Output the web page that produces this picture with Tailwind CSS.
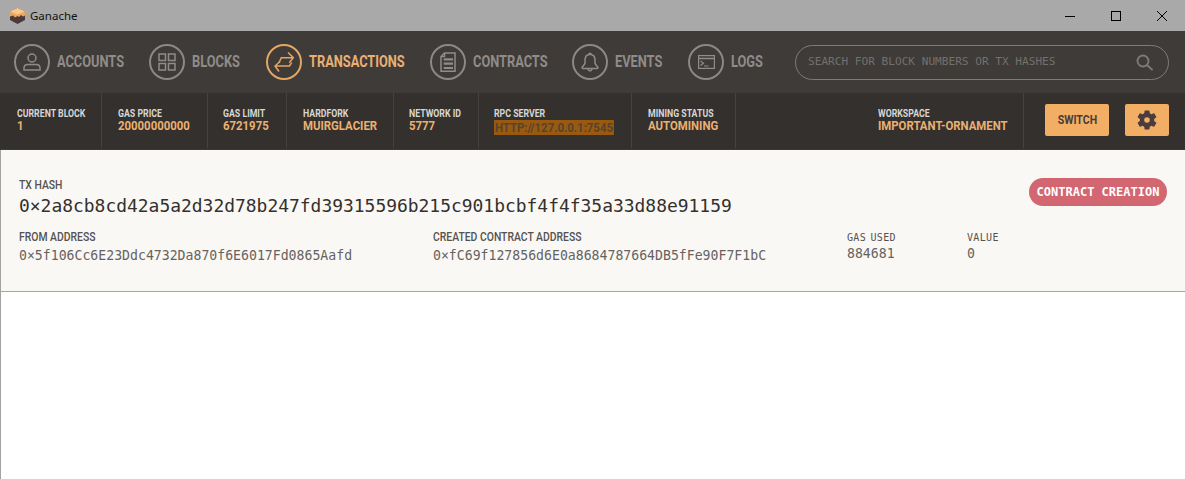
<!DOCTYPE html>
<html lang="en">
<head>
    <meta charset="UTF-8">
    <script src="https://cdn.jsdelivr.net/npm/@tailwindcss/browser@4"></script>
    <title>Ganache</title>
</head>

<body class="bg-white font-['Roboto',sans-serif] overflow-hidden">
    <main class="h-[479px] border-l border-[#a3a3a3] flex flex-col">

        <!-- title bar -->
        <div class="h-[31px] -ml-px bg-[#a9a9a9] flex items-center pl-[10px]">
            <svg class="w-[15px] h-[16px]" viewBox="0 0 15 16">
                <path d="M7.5 0L15 3.5V12L7.5 16L0 12V3.5Z" fill="#4a3a3c"/>
                <path d="M7.5 0L15 3.5V7.500L13 8.500L11 7L9 9L7.5 8L5 9.500L3 7.5L0 8.500V3.5Z" fill="#eda65c"/>
                <path d="M7.5 0L15 3.5L7.5 6.5L0 3.5Z" fill="#f6c98f"/>
            </svg>
            <span class="ml-[5px] text-[11.500px] text-[#111] font-['Noto_Sans',sans-serif]">Ganache</span>
            <div class="ml-auto flex items-center text-black">
                <svg class="w-[46px] h-[16px]" viewBox="0 0 46 16"><path d="M18 8.5H28" stroke="#000" fill="none"/></svg>
                <svg class="w-[46px] h-[16px]" viewBox="0 0 46 16"><rect x="18.500" y="3.500" width="9" height="9" stroke="#000" fill="none"/></svg>
                <svg class="w-[46px] h-[16px]" viewBox="0 0 46 16"><path d="M18 3L28 13M28 3L18 13" stroke="#000" fill="none"/></svg>
            </div>
        </div>

        <!-- nav -->
        <nav class="h-[62px] -ml-px pl-[14px] pr-[16px] bg-[#3f3b38] flex items-center gap-[25px] text-[16px] font-bold text-[#8f8c89]">
            <a class="flex items-center gap-[7px]">
                <span class="w-[36px] h-[36px] rounded-full border-2 border-[#8b8886] flex items-center justify-center">
                    <svg class="w-[20px] h-[20px]" viewBox="0 0 20 20" fill="none" stroke="#8f8c89" stroke-width="1.500">
                        <circle cx="10" cy="6" r="4"/>
                        <path d="M6 12.500H14Q18 12.500 18 16V18H2V16Q2 12.500 6 12.500Z"/>
                    </svg>
                </span>
                <span class="w-[67px] whitespace-nowrap origin-left scale-x-[.8]">ACCOUNTS</span>
            </a>
            <a class="flex items-center gap-[7px]">
                <span class="w-[36px] h-[36px] rounded-full border-2 border-[#8b8886] flex items-center justify-center">
                    <svg class="w-[18px] h-[18px]" viewBox="0 0 18 18" fill="none" stroke="#8f8c89" stroke-width="1.500">
                        <rect x="1" y="1" width="6.500" height="6.500"/>
                        <rect x="10.500" y="1" width="6.500" height="6.500"/>
                        <rect x="1" y="10.500" width="6.500" height="6.500"/>
                        <rect x="10.500" y="10.500" width="6.500" height="6.500"/>
                    </svg>
                </span>
                <span class="w-[49px] whitespace-nowrap origin-left scale-x-[.8]">BLOCKS</span>
            </a>
            <a class="flex items-center gap-[7px] text-[#eab073]">
                <span class="w-[36px] h-[36px] rounded-full border-2 border-[#e4a663] flex items-center justify-center">
                    <svg class="w-[20px] h-[20px]" viewBox="0 0 20 20" fill="none" stroke="#e4a663" stroke-width="1.500">
                        <path d="M5 10.700L7.300 5.700H19.300M14 .5L19.300 5.700L15.300 10.700"/>
                        <path d="M17.700 10.700L15.500 14H1M6 9.500L1 14L5 19.500"/>
                    </svg>
                </span>
                <span class="w-[96px] whitespace-nowrap origin-left scale-x-[.8]">TRANSACTIONS</span>
            </a>
            <a class="flex items-center gap-[7px]">
                <span class="w-[36px] h-[36px] rounded-full border-2 border-[#8b8886] flex items-center justify-center">
                    <svg class="w-[16px] h-[20px]" viewBox="0 0 16 20" fill="none" stroke="#8f8c89" stroke-width="1.500">
                        <path d="M4.500 1H15V19.200H1V4.500Z"/>
                        <path d="M4.500 1V4.500H1"/>
                        <path d="M3.700 7.300H13M3.700 11.700H13M3.700 16H13" stroke-width="2.200"/>
                    </svg>
                </span>
                <span class="w-[74px] whitespace-nowrap origin-left scale-x-[.8]">CONTRACTS</span>
            </a>
            <a class="flex items-center gap-[7px]">
                <span class="w-[36px] h-[36px] rounded-full border-2 border-[#8b8886] flex items-center justify-center">
                    <svg class="w-[18px] h-[21px]" viewBox="0 0 18 21" fill="none" stroke="#8f8c89" stroke-width="1.500">
                        <path d="M9 2.500C12.500 2.500 14 5 14 8V11.500L17 15.500Q17 16.500 16 16.500H2Q1 16.500 1 15.500L4 11.500V8C4 5 5.500 2.500 9 2.500Z"/>
                        <path d="M7.500 2.500Q9 0 10.500 2.500M6.500 16.500Q9 21.500 11.500 16.500"/>
                    </svg>
                </span>
                <span class="w-[48px] whitespace-nowrap origin-left scale-x-[.8]">EVENTS</span>
            </a>
            <a class="flex items-center gap-[7px]">
                <span class="w-[36px] h-[36px] rounded-full border-2 border-[#8b8886] flex items-center justify-center">
                    <svg class="w-[17px] h-[14px]" viewBox="0 0 17 14" fill="none" stroke="#8f8c89" stroke-width="1.200">
                        <rect x="0.600" y="0.600" width="15.800" height="12.800"/>
                        <path d="M0.600 3.500H16.400" stroke-width="1.500"/>
                        <path d="M2.500 6L5.500 8.200L2.500 10.500M6 11H10.500"/>
                    </svg>
                </span>
                <span class="w-[32px] whitespace-nowrap origin-left scale-x-[.8]">LOGS</span>
            </a>

            <div class="ml-auto w-[374px] h-[35px] rounded-full border border-[#7e7b78] pl-[12px] pr-[15px] flex items-center justify-between">
                <span class="pt-[1px] font-['DejaVu_Sans_Mono',monospace] font-normal text-[11.120px] text-[#73706d]">SEARCH FOR BLOCK NUMBERS OR TX HASHES</span>
                <svg class="w-[17px] h-[17px]" viewBox="0 0 17 17" fill="none" stroke="#7e7b78" stroke-width="1.800">
                    <circle cx="7" cy="7" r="5.500"/>
                    <path d="M11 11L16.500 16"/>
                </svg>
            </div>
        </nav>

        <!-- stats -->
        <div class="h-[57px] -ml-px bg-[#33302d] flex text-[#d8d6d4] border-b border-[#3b3835] whitespace-nowrap">
            <div class="w-[102px] h-[55px] pl-[17px] pt-[15px] border-r border-[#45423f] leading-[12px]">
                <div class="text-[10px] font-bold origin-left scale-x-[.875]">CURRENT BLOCK</div>
                <div class="text-[13px] font-bold text-[#eab073] origin-left scale-x-[.875]">1</div>
            </div>
            <div class="w-[106px] h-[55px] pl-[16px] pt-[15px] border-r border-[#45423f] leading-[12px]">
                <div class="text-[10px] font-bold origin-left scale-x-[.875]">GAS PRICE</div>
                <div class="text-[13px] font-bold text-[#eab073] origin-left scale-x-[.875]">20000000000</div>
            </div>
            <div class="w-[79px] h-[55px] pl-[15px] pt-[15px] border-r border-[#45423f] leading-[12px]">
                <div class="text-[10px] font-bold origin-left scale-x-[.875]">GAS LIMIT</div>
                <div class="text-[13px] font-bold text-[#eab073] origin-left scale-x-[.875]">6721975</div>
            </div>
            <div class="w-[107px] h-[55px] pl-[16px] pt-[15px] border-r border-[#45423f] leading-[12px]">
                <div class="text-[10px] font-bold origin-left scale-x-[.875]">HARDFORK</div>
                <div class="text-[13px] font-bold text-[#eab073] origin-left scale-x-[.875]">MUIRGLACIER</div>
            </div>
            <div class="w-[85px] h-[55px] pl-[15px] pt-[15px] border-r border-[#45423f] leading-[12px]">
                <div class="text-[10px] font-bold origin-left scale-x-[.875]">NETWORK ID</div>
                <div class="text-[13px] font-bold text-[#eab073] origin-left scale-x-[.875]">5777</div>
            </div>
            <div class="w-[153px] h-[55px] pl-[15px] pt-[15px] border-r border-[#45423f] leading-[12px]">
                <div class="text-[10px] font-bold origin-left scale-x-[.875]">RPC SERVER</div>
                <div class="inline-block h-[15px] leading-[15px] px-[1px] text-[13px] font-bold text-[#57432f] bg-[#995a10] origin-left scale-x-[.875]">HTTP://127.0.0.1:7545</div>
            </div>
            <div class="w-[104px] h-[55px] pl-[16px] pt-[15px] border-r border-[#45423f] leading-[12px]">
                <div class="text-[10px] font-bold origin-left scale-x-[.875]">MINING STATUS</div>
                <div class="text-[13px] font-bold text-[#eab073] origin-left scale-x-[.875]">AUTOMINING</div>
            </div>
            <div class="ml-auto w-[146px] h-[55px] pt-[15px] border-r border-[#45423f] leading-[12px]">
                <div class="text-[10px] font-bold origin-left scale-x-[.875]">WORKSPACE</div>
                <div class="text-[13px] font-bold text-[#eab073] origin-left scale-x-[.875]">IMPORTANT-ORNAMENT</div>
            </div>
            <div class="pl-[21px] pr-[16px] pt-[11px] flex gap-[16px]">
                <button class="w-[64px] h-[32px] rounded-[2px] bg-[#f3ae66] text-[#4a3b3c] text-[12px] font-bold"><span class="inline-block scale-x-[.88]">SWITCH</span></button>
                <button class="w-[44px] h-[32px] rounded-[2px] bg-[#f3ae66] flex items-center justify-center">
                    <svg class="w-[24px] h-[24px]" viewBox="0 0 24 24" fill="#4a3b3c">
                        <path fill-rule="evenodd" d="M19.140 12.940c.04-.3.060-.61.060-.94 0-.32-.020-.64-.070-.94l2.030-1.580a.49.49 0 0 0 .12-.61l-1.920-3.320a.49.49 0 0 0-.59-.22l-2.390.96c-.5-.38-1.030-.7-1.620-.94l-.36-2.540a.48.48 0 0 0-.48-.41h-3.840a.48.48 0 0 0-.47.41l-.36 2.540c-.59.24-1.130.57-1.620.94l-2.390-.96a.49.49 0 0 0-.59.22L2.740 8.870a.48.48 0 0 0 .12.61l2.030 1.580c-.05.3-.09.63-.09.94s.020.64.070.94l-2.030 1.580a.49.49 0 0 0-.12.61l1.920 3.320c.12.22.37.29.59.22l2.390-.96c.5.38 1.030.7 1.620.94l.36 2.540c.05.24.24.41.48.41h3.840c.24 0 .44-.17.47-.41l.36-2.540c.59-.24 1.130-.56 1.620-.94l2.390.96c.22.080.47 0 .59-.22l1.920-3.320a.48.48 0 0 0-.12-.61l-2.010-1.580zM12 14.800a2.800 2.800 0 1 1 0-5.600 2.800 2.800 0 0 1 0 5.600z"/>
                    </svg>
                </button>
            </div>
        </div>

        <!-- transaction card -->
        <section class="relative h-[142px] bg-[#faf8f5] border-b border-[#a8a6a4] pl-[18px] pt-[29px] whitespace-nowrap">
            <div class="text-[12px] font-medium text-[#55524f] leading-[13px] origin-left scale-x-[.865]">TX HASH</div>
            <div class="mt-[2px] font-['DejaVu_Sans_Mono',monospace] text-[17.950px] leading-[24px] text-[#33302d]">0×2a8cb8cd42a5a2d32d78b247fd39315596b215c901bcbf4f4f35a33d88e91159</div>

            <span class="absolute top-[28px] right-[18px] h-[28px] w-[138px] rounded-full bg-[#d26671] text-white font-['DejaVu_Sans_Mono',monospace] font-bold text-[12px] flex items-center justify-center">CONTRACT CREATION</span>

            <div class="mt-[13px] grid grid-cols-[414px_414px_120px_1fr]">
                <div>
                    <div class="text-[12px] font-medium text-[#55524f] leading-[13px] origin-left scale-x-[.865]">FROM ADDRESS</div>
                    <div class="mt-[2px] font-['DejaVu_Sans_Mono',monospace] text-[13.180px] leading-[20px] text-[#66635f]">0×5f106Cc6E23Ddc4732Da870f6E6017Fd0865Aafd</div>
                </div>
                <div>
                    <div class="text-[12px] font-medium text-[#55524f] leading-[13px] origin-left scale-x-[.865]">CREATED CONTRACT ADDRESS</div>
                    <div class="mt-[2px] font-['DejaVu_Sans_Mono',monospace] text-[13.180px] leading-[20px] text-[#66635f]">0×fC69f127856d6E0a8684787664DB5fFe90F7F1bC</div>
                </div>
                <div>
                    <div class="font-['DejaVu_Sans_Mono',monospace] text-[10px] text-[#55524f] leading-[13px] tracking-[0.35px] [word-spacing:-2px]">GAS USED</div>
                    <div class="mt-[1px] font-['DejaVu_Sans_Mono',monospace] text-[13.180px] leading-[17px] text-[#66635f]">884681</div>
                </div>
                <div>
                    <div class="font-['DejaVu_Sans_Mono',monospace] text-[10px] text-[#55524f] leading-[13px] tracking-[0.35px]">VALUE</div>
                    <div class="mt-[1px] font-['DejaVu_Sans_Mono',monospace] text-[13.180px] leading-[17px] text-[#66635f]">0</div>
                </div>
            </div>
        </section>

    </main>
</body>
</html>
